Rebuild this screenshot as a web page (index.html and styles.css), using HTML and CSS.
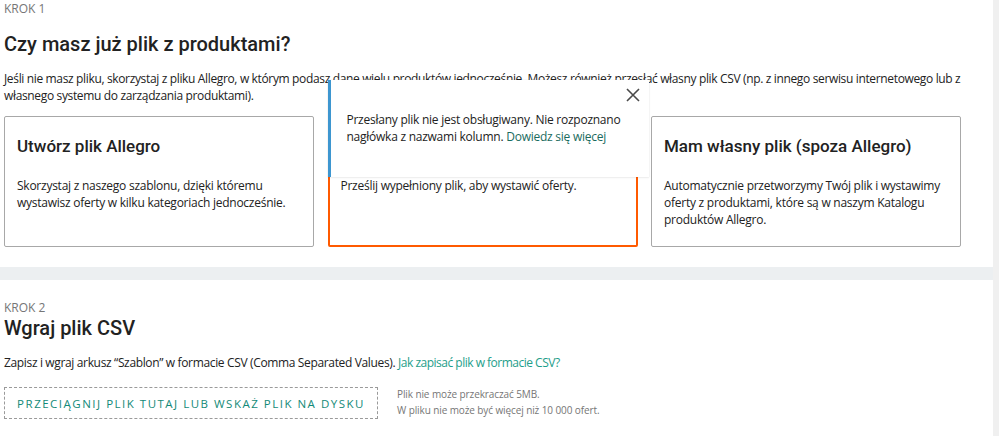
FILE: index.html
```html
<!DOCTYPE html>
<html lang="pl">
<head>
<meta charset="utf-8">
<link rel="stylesheet" href="styles.css">
</head>
<body>
<div class="page">
  <section class="step step1">
    <div class="step-label">KROK 1</div>
    <h1 class="title">Czy masz już plik z produktami?</h1>
    <p class="lead">Jeśli nie masz pliku, skorzystaj z pliku Allegro, w którym podasz dane wielu produktów jednocześnie. Możesz również przesłać własny plik CSV (np. z innego serwisu internetowego lub z własnego systemu do zarządzania produktami).</p>
    <div class="cards">
      <div class="card">
        <h2 class="card-title">Utwórz plik Allegro</h2>
        <p class="card-text">Skorzystaj z naszego szablonu, dzięki któremu wystawisz oferty w kilku kategoriach jednocześnie.</p>
      </div>
      <div class="card card-active">
        <h2 class="card-title">Wgraj plik Allegro</h2>
        <p class="card-text">Prześlij wypełniony plik, aby wystawić oferty.</p>
        <div class="toast">
          <p class="toast-text">Przesłany plik nie jest obsługiwany. Nie rozpoznano nagłówka z nazwami kolumn. <a class="link-dark" href="#">Dowiedz się więcej</a></p>
          <button class="toast-close" aria-label="Zamknij">
            <svg width="14" height="14" viewBox="0 0 14 14"><path d="M1 1L13 13M13 1L1 13" stroke="#4a4a4a" stroke-width="1.6" fill="none"/></svg>
          </button>
        </div>
      </div>
      <div class="card">
        <h2 class="card-title">Mam własny plik (spoza Allegro)</h2>
        <p class="card-text">Automatycznie przetworzymy Twój plik i wystawimy oferty z produktami, które są w naszym Katalogu produktów Allegro.</p>
      </div>
    </div>
  </section>
  <div class="divider"></div>
  <section class="step step2">
    <div class="step-label">KROK 2</div>
    <h1 class="title title2">Wgraj plik CSV</h1>
    <p class="lead lead2">Zapisz i wgraj arkusz “Szablon” w formacie CSV (Comma Separated Values). <a class="link" href="#">Jak zapisać plik w formacie CSV?</a></p>
    <div class="upload-row">
      <div class="dropzone">PRZECIĄGNIJ PLIK TUTAJ LUB WSKAŻ PLIK NA DYSKU</div>
      <div class="limits">
        <div>Plik nie może przekraczać 5MB.</div>
        <div>W pliku nie może być więcej niż 10 000 ofert.</div>
      </div>
    </div>
  </section>
</div>
<div class="scrollbar"></div>
</body>
</html>
```

FILE: styles.css
```css
* { box-sizing: border-box; }
html, body { margin: 0; padding: 0; }
body {
  background: #fff;
  font-family: "Open Sans", "Liberation Sans", sans-serif;
  color: #222;
  width: 999px;
  height: 436px;
  overflow: hidden;
  position: relative;
}
.page { width: 993px; }
.step { padding: 0 4px; }
.step1 { padding-top: 1px; padding-bottom: 20px; }
.step-label {
  font-size: 12px;
  color: #767676;
  line-height: 16px;
}
.title {
  font-family: Roboto, "Liberation Sans", sans-serif;
  font-weight: 500;
  font-size: 20px;
  color: #222;
  margin: 13px 0 0;
  line-height: 28px;
}
.lead {
  font-size: 12px;
  letter-spacing: -0.35px;
  line-height: 17px;
  margin: 12px 0 0;
  color: #222;
  width: 975px;
}
.cards {
  display: flex;
  gap: 13.5px;
  margin-top: 12px;
}
.card {
  position: relative;
  width: 310px;
  height: 131px;
  border: 1px solid #a8a8a8;
  border-radius: 2px;
  padding: 17px 12px 0;
  background: #fff;
}
.card-active { border: 2px solid #ff5a00; padding: 16px 11px 0; }
.card-title {
  font-family: Roboto, "Liberation Sans", sans-serif;
  font-weight: 500;
  font-size: 17px;
  line-height: 24px;
  margin: 0;
  color: #222;
}
.card-text, .toast-text {
  font-size: 12px;
  letter-spacing: -0.25px;
  line-height: 17px;
  color: #222;
}
.card-text { margin: 19px 0 0; }
.toast {
  position: absolute;
  left: -2px;
  top: -38px;
  width: 321px;
  height: 97px;
  background: #fff;
  border-left: 3px solid #3d96d0;
  box-shadow: 0 0 1px rgba(0,0,0,0.15), 0 1px 2px rgba(0,0,0,0.06);
  padding: 31px 18px 0 16px;
}
.toast-text { margin: 0; }
.link-dark { color: #1a6b5e; text-decoration: none; }
.toast-close {
  position: absolute;
  top: 8px;
  right: 9px;
  width: 14px;
  height: 14px;
  padding: 0;
  border: 0;
  background: none;
  display: flex;
}
.divider {
  height: 13px;
  background: #eceff1;
}
.step2 { padding-top: 20px; }
.title2 { margin-top: -2px; }
.lead2 { margin-top: 12px; }
.link { color: #1e9e8a; text-decoration: none; letter-spacing: -0.5px; }
.upload-row {
  display: flex;
  align-items: flex-start;
  gap: 19px;
  margin-top: 16px;
}
.dropzone {
  width: 374px;
  height: 32px;
  border: 1px dashed #9a9a9a;
  display: flex;
  align-items: center;
  justify-content: center;
  font-size: 11.5px;
  letter-spacing: 1.5px;
  color: #138a78;
  white-space: nowrap;
}
.limits {
  font-size: 10px;
  letter-spacing: -0.1px;
  line-height: 16px;
  color: #767676;
  margin-top: -1px;
}
.scrollbar {
  position: absolute;
  top: 0;
  right: 0;
  width: 6px;
  height: 436px;
  background: #f0f0f0;
}
```
